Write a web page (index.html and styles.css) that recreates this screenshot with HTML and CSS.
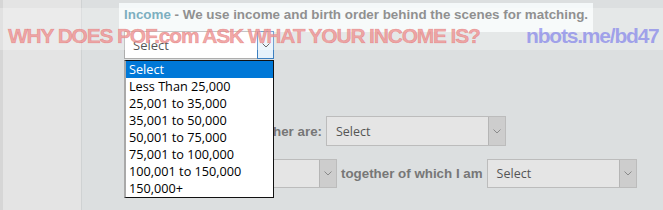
FILE: index.html
```html
<!DOCTYPE html>
<html>
<head>
<meta charset="utf-8">
<link rel="stylesheet" href="styles.css">
</head>
<body>
<div class="page">
  <aside class="side"></aside>
  <main class="main">
    <div class="hint"><span class="hint-key">Income</span> - We use income and birth order behind the scenes for matching.</div>
    <div class="fields">
      <div class="row row1">
        <div class="sel sel-white w150">
          <span class="sel-text">Select</span>
          <span class="sel-btn sel-btn-focus"><svg width="8" height="5" viewBox="0 0 8 5"><polyline points="0.5,0.5 4,4 7.5,0.5" fill="none" stroke="#333" stroke-width="1"/></svg></span>
        </div>
      </div>
      <div class="row row2">
        <span class="lbl lbl-fixed">Siblings together are:</span>
        <div class="sel sel-gray w180">
          <span class="sel-text">Select</span>
          <span class="sel-btn"><svg width="8" height="5" viewBox="0 0 8 5"><polyline points="0.5,0.5 4,4 7.5,0.5" fill="none" stroke="#8a8a8a" stroke-width="1"/></svg></span>
        </div>
      </div>
      <div class="row row3">
        <div class="sel sel-gray w150">
          <span class="sel-text">Select</span>
          <span class="sel-btn"><svg width="8" height="5" viewBox="0 0 8 5"><polyline points="0.5,0.5 4,4 7.5,0.5" fill="none" stroke="#8a8a8a" stroke-width="1"/></svg></span>
        </div>
        <span class="lbl">together of which I am</span>
        <div class="sel sel-gray w150">
          <span class="sel-text">Select</span>
          <span class="sel-btn"><svg width="8" height="5" viewBox="0 0 8 5"><polyline points="0.5,0.5 4,4 7.5,0.5" fill="none" stroke="#8a8a8a" stroke-width="1"/></svg></span>
        </div>
      </div>
    </div>
    <ul class="list">
      <li class="on">Select</li>
      <li>Less Than 25,000</li>
      <li>25,001 to 35,000</li>
      <li>35,001 to 50,000</li>
      <li>50,001 to 75,000</li>
      <li>75,001 to 100,000</li>
      <li>100,001 to 150,000</li>
      <li>150,000+</li>
    </ul>
  </main>
  <div class="watermark">
    <span class="wm-red">WHY DOES POF.com ASK WHAT YOUR INCOME IS?</span>
    <span class="wm-blue">nbots.me/bd47</span>
  </div>
</div>
</body>
</html>
```

FILE: styles.css
```css
html, body {
  margin: 0;
  padding: 0;
}
body {
  background: #dcdfe0;
  font-family: "Liberation Sans", Arial, sans-serif;
}
.page {
  position: relative;
  display: flex;
  min-height: 210px;
  width: 663px;
  overflow: hidden;
}
.side {
  width: 78px;
  flex: none;
  background: #e4e4e4;
  border-left: 3px solid #d6d6d6;
  border-right: 1px solid #cfd2d3;
}
.main {
  position: relative;
  flex: 1;
  padding: 3px 0 0 37px;
}
.hint {
  display: inline-block;
  background: #f4f8f9;
  padding: 4px 5px 9px 5px;
  line-height: 16px;
  font-size: 13.4px;
  font-weight: bold;
  color: #666;
  white-space: nowrap;
}
.hint-key {
  color: #4b90a8;
}
.fields {
  padding-left: 5px;
  margin-top: -1px;
}
.row {
  display: flex;
  align-items: center;
}
.row2 {
  margin-top: 57px;
  gap: 4px;
}
.row3 {
  margin-top: 13px;
  margin-left: 63px;
  gap: 4px;
}
.lbl {
  font-size: 13.35px;
  font-weight: bold;
  color: #777;
  white-space: nowrap;
}
.lbl-fixed {
  width: 198px;
  text-align: right;
}
.sel {
  box-sizing: border-box;
  display: flex;
  align-items: center;
  justify-content: space-between;
  height: 28px;
  font-family: "Open Sans", sans-serif;
  font-size: 12.5px;
}
.w150 { width: 150px; }
.w180 { width: 180px; }
.row2 .sel { height: 30px; }
.row3 .sel { height: 29px; }
.sel-white {
  background: #fff;
  border: 1px solid #adadad;
  color: #111;
  font-size: 13px;
}
.sel-gray {
  background: #e5e5e5;
  border: 1px solid #bcbcbc;
  color: #555;
}
.sel-text {
  padding-left: 8px;
}
.sel-gray .sel-text {
  padding-left: 9px;
}
.sel-btn {
  box-sizing: border-box;
  align-self: stretch;
  width: 17px;
  display: flex;
  align-items: center;
  justify-content: center;
  background: #cdcdcd;
  border-left: 1px solid #b5b5b5;
}
.sel-btn-focus {
  background: #e5f1fb;
  border: 1px solid #3c7fc0;
  margin: -1px -1px -1px 0;
  width: 17px;
}
.list {
  position: absolute;
  top: 60px;
  left: 42px;
  width: 150px;
  box-sizing: border-box;
  margin: 0;
  padding: 0;
  list-style: none;
  background: #fff;
  border: 1px solid #111;
  border-left: 2px solid #a9a9a9;
  font-family: "Open Sans", sans-serif;
  font-size: 12.7px;
  color: #000;
}
.list li {
  height: 17px;
  line-height: 17px;
  padding-left: 3px;
  white-space: nowrap;
}
.list li.on {
  background: #0078d7;
  color: #fff;
}
.watermark {
  position: absolute;
  top: 8px;
  left: 0;
  width: 663px;
  height: 42px;
  background: rgba(255, 255, 255, 0.28);
  font-family: "Liberation Sans", Arial, sans-serif;
  font-weight: bold;
  font-size: 21px;
  line-height: 24px;
}
.wm-red {
  position: absolute;
  left: 8px;
  top: 16px;
  letter-spacing: -1.2px;
  color: rgba(224, 70, 70, 0.48);
  -webkit-text-stroke: 0.6px rgba(215, 60, 60, 0.35);
  text-shadow: 0 0 1px rgba(255, 255, 255, 0.7);
  white-space: nowrap;
}
.wm-blue {
  position: absolute;
  left: 526px;
  top: 16px;
  letter-spacing: -1.2px;
  color: rgba(100, 100, 235, 0.55);
  white-space: nowrap;
}
```
